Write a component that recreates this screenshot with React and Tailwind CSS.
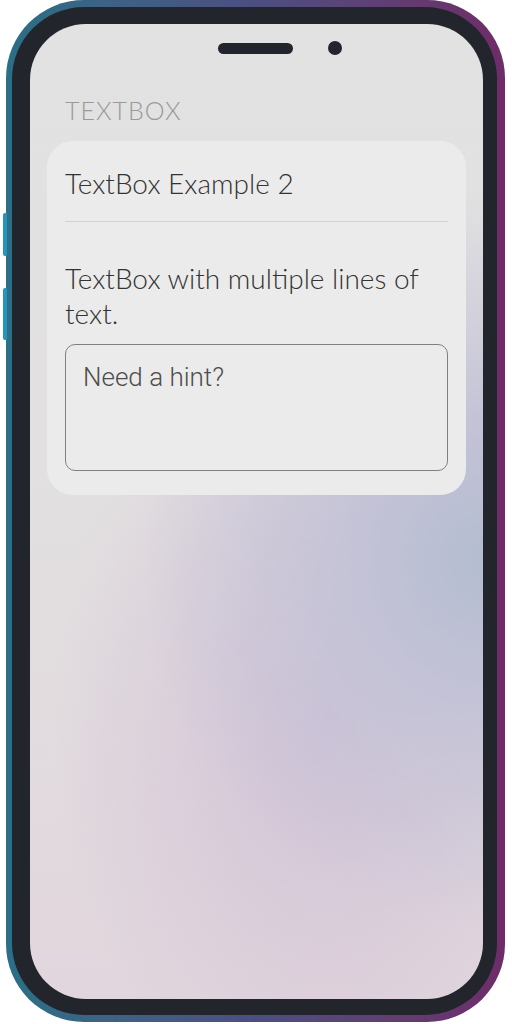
import React from 'react';

const nunito = { fontFamily: 'Lato, "Open Sans", sans-serif' };

function SideButtons() {
    return (
        <>
            <div className="absolute left-[3px] top-[213px] w-[4px] h-[43px] rounded-l-[2px] bg-[#2495bd]" />
            <div className="absolute left-[3px] top-[288px] w-[4px] h-[52px] rounded-l-[2px] bg-[#2495bd]" />
        </>
    );
}

function Notch() {
    return (
        <div className="flex items-center pt-[17px] h-[14px] box-content">
            <div className="ml-[188px] w-[75px] h-[11px] rounded-full bg-[#22252c]" />
            <div className="ml-[35px] w-[14px] h-[14px] rounded-full bg-[#22252c]" />
        </div>
    );
}

function TextBoxCard() {
    return (
        <div className="mx-[17px] mt-[16px] rounded-[26px] bg-[#ebebeb] px-[18px] pt-[25px] pb-[24px]">
            <div className="text-[28px] leading-[35px] font-light text-[#333]" style={nunito}>
                TextBox Example 2
            </div>
            <div className="mt-[20px] h-px bg-[#d2d2d2]" />
            <div className="mt-[39px] text-[28px] leading-[35px] font-light text-[#333]" style={nunito}>
                TextBox with multiple lines of text.
            </div>
            <div className="mt-[13px] h-[127px] rounded-[10px] border border-[#808080] px-[17px] pt-[17px]">
                <div className="text-[26px] leading-[30px] font-[350] text-[#4d4d4d] font-['Roboto',sans-serif]">
                    Need a hint?
                </div>
            </div>
        </div>
    );
}

export default function App() {
    return (
        <div className="relative w-[512px] h-[1024px] bg-white overflow-hidden">
            <SideButtons />
            <div className="ml-[6px] w-[499px] h-[1022px] rounded-[78px] bg-linear-to-r from-[#2a6f86] via-[#4b4f80] to-[#6d2c68] pt-[7px] pl-[6px] pr-[8px] pb-[7px]">
                <div className="h-full rounded-[72px] bg-[#22252c] pt-[17px] pl-[18px] pr-[14px] pb-[16px]">
                    <div className="h-full rounded-[56px] overflow-hidden bg-[radial-gradient(ellipse_75%_38%_at_100%_55%,#b4bdd0_0%,#c3c2d6_35%,transparent_100%),radial-gradient(ellipse_60%_40%_at_65%_72%,#d2c2d6_0%,transparent_100%),linear-gradient(to_bottom,#e2e2e2_0%,#e2e0e0_45%,#e1d6dd_100%)]">
                        <Notch />
                        <div className="pl-[35px] mt-[40px] text-[25px] leading-[30px] font-light tracking-[1px] text-[#9a9a9a]" style={nunito}>
                            TEXTBOX
                        </div>
                        <TextBoxCard />
                    </div>
                </div>
            </div>
        </div>
    );
}
